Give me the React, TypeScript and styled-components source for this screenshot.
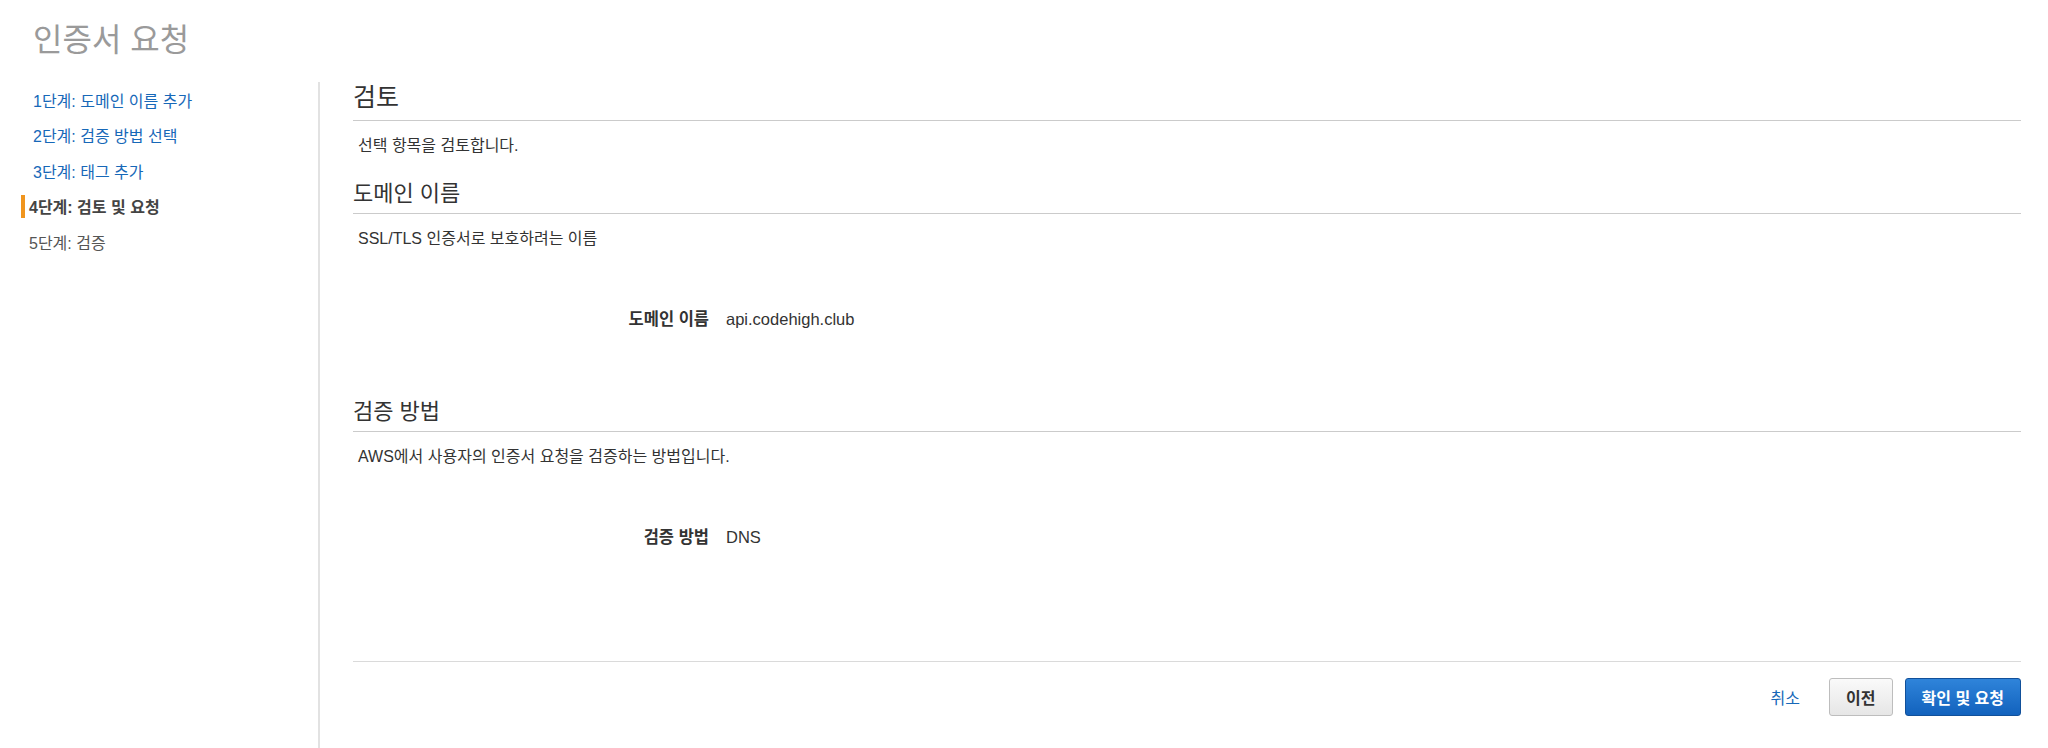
import styled, { createGlobalStyle } from "styled-components";

const Global = createGlobalStyle`
	html, body { margin: 0; padding: 0; background: #fff; }
	body {
		font-family: "Liberation Sans", "Noto Sans CJK KR", sans-serif;
		color: #333;
	}
`;

const Page = styled.div`
	height: 748px;
	display: flex;
	flex-direction: column;
`;
const Title = styled.h1`
	margin: 0;
	padding: 20px 0 22px 33px;
	font-size: 32px;
	line-height: 40px;
	font-weight: 400;
	color: #9a9a9a;
`;
const Layout = styled.div`
	flex: 1;
	display: flex;
	min-height: 0;
`;
const Sidebar = styled.nav`
	width: 318px;
	border-right: 2px solid #e2e2e2;
	display: flex;
	flex-direction: column;
`;
const Step = styled.div<{ $state: "done" | "active" | "todo" }>`
	display: flex;
	align-items: center;
	height: 35.5px;
	font-size: 16px;
	padding-left: ${(p) => (p.$state === "done" ? 33 : p.$state === "active" ? 21 : 29)}px;
	color: ${(p) => (p.$state === "done" ? "#1768b8" : p.$state === "active" ? "#444" : "#555")};
	font-weight: ${(p) => (p.$state === "active" ? 700 : 400)};
`;
const Marker = styled.span`
	width: 4px;
	height: 23px;
	margin: 0 4px 0 0;
	background: #f0951e;
`;
const Main = styled.main`
	flex: 1;
	display: flex;
	flex-direction: column;
	padding: 0 27px 0 33px;
`;
const Heading = styled.h2<{ $big?: boolean }>`
	margin: ${(p) => (p.$big ? "0" : "24px 0 0")};
	padding-bottom: ${(p) => (p.$big ? 8 : 5)}px;
	border-bottom: 1px solid #cbcbcb;
	font-size: ${(p) => (p.$big ? 25 : 22)}px;
	line-height: ${(p) => (p.$big ? 30 : 28)}px;
	font-weight: 400;
	color: #333;
`;
const Desc = styled.p`
	margin: 15px 0 0;
	padding-left: 5px;
	font-size: 16px;
	line-height: 20px;
	color: #333;
`;
const Detail = styled.div`
	display: grid;
	grid-template-columns: 356px 1fr;
	column-gap: 17px;
	margin: 60px 0 0;
	font-size: 16.5px;
	line-height: 20px;
	& + h2 {
		margin-top: 69px;
	}
`;
const Label = styled.span`
	text-align: right;
	font-weight: 700;
	color: #333;
`;
const Value = styled.span`
	color: #333;
`;
const Footer = styled.footer`
	margin-top: auto;
	border-top: 1px solid #dadada;
	padding: 16px 0 32px;
	display: flex;
	justify-content: flex-end;
	align-items: center;
	gap: 12px;
`;
const Cancel = styled.a`
	font-size: 16px;
	color: #1768b8;
	margin-right: 17px;
	cursor: pointer;
`;
const Button = styled.button<{ $primary?: boolean }>`
	height: 38px;
	padding: 0 16px;
	border-radius: 3px;
	font-family: inherit;
	font-size: 16px;
	font-weight: 700;
	cursor: pointer;
	border: 1px solid ${(p) => (p.$primary ? "#11509a" : "#bdbdbd")};
	color: ${(p) => (p.$primary ? "#fff" : "#333")};
	background: ${(p) =>
		p.$primary
			? "linear-gradient(#2f84da, #1262bd)"
			: "linear-gradient(#fafafa, #e6e6e6)"};
`;

const steps: { label: string; state: "done" | "active" | "todo" }[] = [
	{ label: "1단계: 도메인 이름 추가", state: "done" },
	{ label: "2단계: 검증 방법 선택", state: "done" },
	{ label: "3단계: 태그 추가", state: "done" },
	{ label: "4단계: 검토 및 요청", state: "active" },
	{ label: "5단계: 검증", state: "todo" },
];

export default function App() {
	return (
		<Page>
			<Global />
			<Title>인증서 요청</Title>
			<Layout>
				<Sidebar>
					{steps.map((s) => (
						<Step key={s.label} $state={s.state}>
							{s.state === "active" && <Marker />}
							{s.label}
						</Step>
					))}
				</Sidebar>
				<Main>
					<Heading $big>검토</Heading>
					<Desc>선택 항목을 검토합니다.</Desc>

					<Heading>도메인 이름</Heading>
					<Desc>SSL/TLS 인증서로 보호하려는 이름</Desc>
					<Detail>
						<Label>도메인 이름</Label>
						<Value>api.codehigh.club</Value>
					</Detail>

					<Heading>검증 방법</Heading>
					<Desc>AWS에서 사용자의 인증서 요청을 검증하는 방법입니다.</Desc>
					<Detail>
						<Label>검증 방법</Label>
						<Value>DNS</Value>
					</Detail>

					<Footer>
						<Cancel>취소</Cancel>
						<Button>이전</Button>
						<Button $primary>확인 및 요청</Button>
					</Footer>
				</Main>
			</Layout>
		</Page>
	);
}
